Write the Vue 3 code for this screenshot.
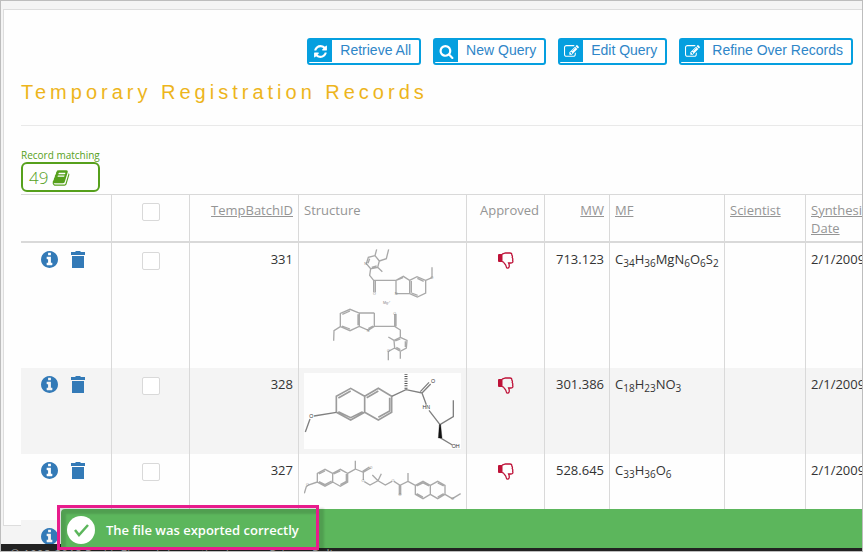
<script setup>
import { ref } from 'vue'

const icons = {
  refresh:
    'M1639 1056q0 5-1 7-64 268-268 434.5t-478 166.5q-146 0-282.5-55t-243.5-157l-129 129q-19 19-45 19t-45-19-19-45v-448q0-26 19-45t45-19h448q26 0 45 19t19 45-19 45l-137 137q71 66 161 102t187 36q134 0 250-65t186-179q11-17 53-117 8-23 30-23h192q13 0 22.5 9.5t9.5 22.5zm25-800v448q0 26-19 45t-45 19h-448q-26 0-45-19t-19-45 19-45l138-138q-148-137-349-137-134 0-250 65t-186 179q-11 17-53 117-8 23-30 23h-199q-13 0-22.5-9.5t-9.5-22.5v-7q65-268 270-434.5t480-166.5q146 0 284 55.5t245 156.5l130-129q19-19 45-19t45 19 19 45z',
  search:
    'M1216 832q0-185-131.5-316.5t-316.5-131.5-316.5 131.5-131.5 316.5 131.5 316.5 316.5 131.5 316.5-131.5 131.5-316.5zm512 832q0 52-38 90t-90 38q-54 0-90-38l-343-342q-179 124-399 124-143 0-273.5-55.5t-225-150-150-225-55.5-273.5 55.5-273.5 150-225 225-150 273.5-55.5 273.5 55.5 225 150 150 225 55.5 273.5q0 220-124 399l343 343q37 37 37 90z',
  edit:
    'M888 1184l116-116-152-152-116 116v56h96v96h56zm440-720q-16-16-33 1l-350 350q-17 17-1 33t33-1l350-350q17-17 1-33zm80 594v190q0 119-84.5 203.5t-203.5 84.5h-832q-119 0-203.5-84.5t-84.5-203.5v-832q0-119 84.5-203.5t203.5-84.5h832q63 0 117 25 15 7 18 23 3 17-9 29l-49 49q-14 14-32 8-23-6-45-6h-832q-66 0-113 47t-47 113v832q0 66 47 113t113 47h832q66 0 113-47t47-113v-126q0-13 9-22l64-64q15-15 35-7t20 29zm-96-738l288 288-672 672h-288v-288zm444 132l-92 92-288-288 92-92q28-28 68-28t68 28l152 152q28 28 28 68t-28 68z',
  book:
    'M1703 478q40 57 18 129l-275 906q-19 64-76.5 107.5t-122.5 43.5h-923q-77 0-148.5-53.5t-99.5-131.5q-24-67-2-127 0-4 3-27t4-37q1-8-3-21.5t-3-19.5q2-11 8-21t16.5-23.5 16.5-23.5q23-38 45-91.5t30-91.5q3-10 .5-30t-.5-28q3-11 17-28t17-23q21-36 42-92t25-90q1-9-2.5-32t.5-28q4-13 22-30.5t22-22.5q19-26 42.5-84.5t27.5-96.5q1-8-3-25.5t-2-26.5q2-8 9-18t18-23 17-21q8-12 16.5-30.5t15-35 16-36 19.5-32 26.5-23.5 36-11.5 47.5 5.5l-1 3q38-9 51-9h761q74 0 114 56t18 130l-274 906q-36 119-71.5 153.5t-128.5 34.5h-869q-27 0-38 15-11 16-1 43 24 70 144 70h923q29 0 56-15.5t35-41.5l300-987q7-22 5-57 38 15 59 43zm-1064 2q-4 13 2 22.5t20 9.5h608q13 0 25.5-9.5t16.5-22.5l21-64q4-13-2-22.5t-20-9.5h-608q-13 0-25.5 9.5t-16.5 22.5zm-83 256q-4 13 2 22.5t20 9.5h608q13 0 25.5-9.5t16.5-22.5l21-64q4-13-2-22.5t-20-9.5h-608q-13 0-25.5 9.5t-16.5 22.5z',
  info:
    'M1152 1376v-160q0-14-9-23t-23-9h-96v-512q0-14-9-23t-23-9h-320q-14 0-23 9t-9 23v160q0 14 9 23t23 9h96v320h-96q-14 0-23 9t-9 23v160q0 14 9 23t23 9h448q14 0 23-9t9-23zm-128-896v-160q0-14-9-23t-23-9h-192q-14 0-23 9t-9 23v160q0 14 9 23t23 9h192q14 0 23-9t9-23zm640 416q0 209-103 385.5t-279.5 279.5-385.5 103-385.5-103-279.5-279.5-103-385.5 103-385.5 279.5-279.5 385.5-103 385.5 103 279.5 279.5 103 385.5z',
}

const actions = [
  { label: 'Retrieve All', icon: 'refresh' },
  { label: 'New Query', icon: 'search' },
  { label: 'Edit Query', icon: 'edit' },
  { label: 'Refine Over Records', icon: 'edit' },
]

// Each formula is a list of [element, count] pairs.
const rows = ref([
  {
    id: 331,
    mw: '713.123',
    mf: [['C', 34], ['H', 36], ['MgN', 6], ['O', 6], ['S', 2]],
    date: '2/1/2009',
    picked: false,
    drawing: {
      box: '12 24 471 345',
      height: 'tall',
      bonds:
        'M230 28L225 47M266 28L259 56L238 63M225 47L205 52L199 71L212 86L233 82L238 63L225 47M209 56L204 70M215 82L230 78M233 82L247 95M212 86L209 106L221 121H288M221 121V157M226 123V157M288 121L310 109L329 121V161H288V121M292 120L309 113M334 123V158M329 121L351 110L377 121V159L352 171L329 161M352 115L371 124M335 159L353 166M377 121L396 113V82M223 219H178L150 208L121 220V260L150 272L178 259V219M150 213L127 223M174 223V256M126 258L150 267M121 260L102 272L101 302M178 259L205 271L223 259V219M205 266L219 258M223 259H284L301 270V292M284 259V222M288 259V222M301 292L282 301L284 324L301 334L319 324L321 301L301 292M301 297L286 303M289 322L301 329M316 321V304M282 301L265 291M284 324L265 334V361M301 334V356',
      labels: [
        { x: 260, y: 192, text: 'Mg²⁺' },
        { x: 223, y: 165, text: 'O' },
        { x: 197, y: 75, text: 'N' },
        { x: 288, y: 165, text: 'N' },
        { x: 396, y: 116, text: 'O' },
        { x: 284, y: 225, text: 'O' },
        { x: 204, y: 275, text: 'N' },
        { x: 265, y: 337, text: 'O' },
      ],
    },
  },
  {
    id: 328,
    mw: '301.386',
    mf: [['C', 18], ['H', 23], ['NO', 3]],
    date: '2/1/2009',
    picked: false,
    drawing: {
      box: '12 24 471 228',
      height: 'middle',
      rings:
        'M109 142V94L152 70L194 94V142L152 165ZM194 94L235 70L275 94V142L235 165L194 142M115 99L152 78M115 140L152 158L188 140M200 98L235 78M269 98V138L235 157',
      bonds:
        'M275 94L318 74L366 84L392 57M361 80L387 52M366 84L379 119M387 136L420 179L460 155V106M109 142L42 153M30 162L16 201M420 218L457 240',
      dashes: 'M318 71V27',
      wedge: 'M418 179H422L426 219H415Z',
      labels: [
        { x: 399, y: 55, text: 'O', strong: true },
        { x: 379, y: 132, text: 'HN', strong: true },
        { x: 34, y: 160, text: 'O', strong: true },
        { x: 467, y: 250, text: 'OH', strong: true },
      ],
    },
  },
  {
    id: 327,
    mw: '528.645',
    mf: [['C', 33], ['H', 36], ['O', 6]],
    date: '2/1/2009',
    picked: false,
    drawing: {
      box: '12 27 471 168',
      height: 'low',
      bonds:
        'M52 96V70L75 58L98 70V96L75 109ZM98 70L121 58L143 70V96L121 109L98 96M57 72L75 63M57 95L75 104L95 93M101 72L121 63M139 72V94L121 104M143 70L166 57V32M166 57L190 67L212 54M188 64L208 51M190 67V90M193 95L210 105L234 92L256 105L276 94M234 92L217 75M234 92L244 71M282 94L300 106L324 94V69M298 106V134M302 106V134M52 96L25 105L19 110L13 130M324 94L346 106V133L369 146L391 133V106L369 94L346 106M350 108L369 99L387 108M350 131L369 141M391 106L413 94L435 106V133L413 146L391 133M413 99L431 108M431 131L413 141M435 133L457 146L482 131',
      labels: [
        { x: 213, y: 57, text: 'O' },
        { x: 189, y: 97, text: 'O' },
        { x: 279, y: 97, text: 'O' },
        { x: 300, y: 138, text: 'O' },
        { x: 22, y: 109, text: 'O' },
        { x: 458, y: 149, text: 'O' },
      ],
    },
  },
  { id: 326, mw: '', mf: [], date: '', picked: false, drawing: null },
])

const allPicked = ref(false)
function pickAll() {
  rows.value.forEach((row) => (row.picked = allPicked.value))
}
</script>

<template>
  <div class="screen">
    <main class="main">
      <section class="panel">
        <nav class="actions">
          <button v-for="a in actions" :key="a.label" type="button" class="action">
            <span class="action-icon">
              <svg viewBox="0 0 1792 1792"><path :d="icons[a.icon]" /></svg>
            </span>
            <span class="action-label">{{ a.label }}</span>
          </button>
        </nav>

        <h1 class="title">Temporary Registration Records</h1>

        <div class="matching">
          <span class="matching-label">Record matching</span>
          <div class="matching-box">
            <span>49</span>
            <svg viewBox="0 0 1792 1792"><path :d="icons.book" /></svg>
          </div>
        </div>

        <div class="table-wrap">
          <table class="records">
            <colgroup>
              <col class="c-tools" /><col class="c-pick" /><col class="c-id" />
              <col class="c-structure" /><col class="c-approved" /><col class="c-mw" />
              <col class="c-mf" /><col class="c-scientist" /><col class="c-date" />
            </colgroup>
            <thead>
              <tr>
                <th></th>
                <th class="center">
                  <input v-model="allPicked" type="checkbox" aria-label="Select all records" @change="pickAll" />
                </th>
                <th class="right"><a href="#">TempBatchID</a></th>
                <th>Structure</th>
                <th class="right">Approved</th>
                <th class="right"><a href="#">MW</a></th>
                <th><a href="#">MF</a></th>
                <th><a href="#">Scientist</a></th>
                <th><a href="#">Synthesis Date</a></th>
              </tr>
            </thead>
            <tbody>
              <tr v-for="row in rows" :key="row.id">
                <td>
                  <div class="tools">
                    <button type="button" aria-label="Details">
                      <svg class="info" viewBox="128 128 1536 1536"><path :d="icons.info" /></svg>
                    </button>
                    <button type="button" aria-label="Delete">
                      <svg class="trash" viewBox="0 0 14 17">
                        <path d="M0 1H4.500V0H9.500V1H14V4H0ZM1 5H13V17H1Z" />
                      </svg>
                    </button>
                  </div>
                </td>
                <td class="center">
                  <input v-model="row.picked" type="checkbox" :aria-label="`Select record ${row.id}`" />
                </td>
                <td class="right">{{ row.id }}</td>
                <td>
                  <svg
                    v-if="row.drawing"
                    class="structure"
                    :class="row.drawing.height"
                    :viewBox="row.drawing.box"
                  >
                    <path v-if="row.drawing.rings" class="rings" :d="row.drawing.rings" />
                    <path class="bonds" :d="row.drawing.bonds" />
                    <path v-if="row.drawing.dashes" class="dashes" :d="row.drawing.dashes" />
                    <path v-if="row.drawing.wedge" class="wedge" :d="row.drawing.wedge" />
                    <text
                      v-for="(l, i) in row.drawing.labels"
                      :key="i"
                      :x="l.x"
                      :y="l.y"
                      :class="{ strong: l.strong }"
                    >{{ l.text }}</text>
                  </svg>
                </td>
                <td>
                  <svg v-if="row.drawing" class="thumb" viewBox="0 0 16 17">
                    <path class="cuff" d="M0 3Q0 2 1 2H4.500V10H1Q0 10 0 9Z" />
                    <path
                      class="hand"
                      d="M4 2.200L7.500 1H12Q14 1 13.800 3Q14.800 4 14.200 5.500Q15.200 7 14.600 8Q15.600 11 13 11H10.600Q11.500 13 11.200 14.500Q10.800 16.200 9.300 16.200Q8.400 16.200 8.200 14.500Q8 13 6.500 11.500Q5.500 9.700 4 9.700"
                    />
                  </svg>
                </td>
                <td class="right">{{ row.mw }}</td>
                <td class="formula"><template v-for="([el, n], i) in row.mf" :key="i">{{ el }}<sub>{{ n }}</sub></template></td>
                <td></td>
                <td>{{ row.date }}</td>
              </tr>
            </tbody>
          </table>
        </div>
      </section>
    </main>

    <footer class="footer">
      <span>© 1998-2018 PerkinElmer Informatics, Inc.</span>
      <a href="#">Privacy Policy</a>
    </footer>

    <div class="toast" role="status">
      <svg class="toast-icon" viewBox="0 0 28 28">
        <circle cx="14" cy="14" r="14" />
        <path d="M8 14L12 19L21 9" />
      </svg>
      <span>The file was exported correctly</span>
    </div>
    <div class="highlight"></div>
  </div>
</template>

<style>
body {
  margin: 0;
}
</style>

<style scoped>
* {
  box-sizing: border-box;
}

.screen {
  position: relative;
  display: flex;
  flex-direction: column;
  height: 100vh;
  overflow: hidden;
  border: 1px solid #bdbdbd;
  background: #f4f4f4;
  color: #333;
  font: 13px/22px "Open Sans", "Noto Sans", sans-serif;
}

.main {
  flex: 1;
  min-height: 0;
  padding: 8px 0 18px 2px;
}

.panel {
  height: 100%;
  padding: 28px 0 0 17px;
  border: 1px solid #ddd;
  border-right: 0;
  background: #fefefe;
}

.actions {
  display: flex;
  justify-content: flex-end;
  gap: 12px;
  padding-right: 9px;
}

.action {
  display: flex;
  height: 27px;
  padding: 0;
  border: 2px solid #059fdf;
  border-radius: 3px;
  background: #fff;
  color: #2f86c8;
  font: 14px/20px "Liberation Sans", Arial, sans-serif;
  cursor: pointer;
}

.action-icon {
  display: flex;
  align-items: center;
  justify-content: center;
  width: 23px;
  height: 22px;
  background: #059fdf;
}

.action-icon svg {
  width: 15px;
  height: 15px;
  fill: #fff;
}

.action-label {
  padding: 0 8px;
}

.title {
  margin: 0;
  padding: 13px 0 18px;
  border-bottom: 1px solid #e9e9e9;
  color: #edb51c;
  font: 400 20px/29px "Liberation Sans", Arial, sans-serif;
  letter-spacing: 4px;
}

.matching {
  width: 79px;
  padding-top: 22px;
  color: #56a01c;
}

.matching-label {
  display: block;
  font-size: 10px;
  line-height: 14px;
  white-space: nowrap;
}

.matching-box {
  display: flex;
  align-items: center;
  gap: 4px;
  height: 30px;
  padding: 2px 6px 0;
  border: 2px solid #56a01c;
  border-radius: 6px;
  font-size: 17px;
  font-weight: 300;
}

.matching-box svg {
  width: 18px;
  height: 18px;
  fill: #56a01c;
}

.table-wrap {
  padding-top: 2px;
  overflow: clip;
  overflow-clip-margin: 60px;
}

.records {
  width: 884px;
  table-layout: fixed;
  border-spacing: 0;
}

.c-tools { width: 90px; }
.c-pick { width: 78px; }
.c-id { width: 109px; }
.c-structure { width: 168px; }
.c-approved { width: 78px; }
.c-mw { width: 65px; }
.c-mf { width: 115px; }
.c-scientist { width: 81px; }
.c-date { width: 100px; }

th {
  height: 49px;
  padding: 6px 5px 0;
  border-top: 1px solid #d9d9d9;
  border-bottom: 2px solid #d9d9d9;
  color: #959595;
  font-weight: 400;
  line-height: 18px;
  text-align: left;
  vertical-align: top;
}

td {
  height: 32px;
  padding: 5px;
  vertical-align: top;
}

th + th,
td + td {
  border-left: 1px solid #d9d9d9;
}

th:nth-child(9) {
  padding-right: 20px;
}

tbody tr {
  background: #fefefe;
}

tbody tr:nth-child(even) {
  background: #f4f4f4;
}

th a {
  color: inherit;
}

.right {
  text-align: right;
}

.center {
  text-align: center;
}

input[type="checkbox"] {
  display: block;
  width: 18px;
  height: 18px;
  margin: 4px auto 0;
  border: 1px solid #d9d9d9;
  border-radius: 2px;
  background: #fff;
  appearance: none;
}

th input[type="checkbox"] {
  margin-top: 2px;
}

input[type="checkbox"]:checked {
  background: #337ab7;
}

.tools {
  display: flex;
  align-items: center;
  gap: 13px;
  height: 22px;
  padding-left: 15px;
}

.tools button {
  display: flex;
  padding: 0;
  border: 0;
  background: none;
  cursor: pointer;
}

.tools svg {
  height: 17px;
  fill: #337ab7;
}

.info {
  width: 17px;
}

.trash {
  width: 14px;
}

.structure {
  display: block;
  width: 157px;
  background: #fefefe;
}

.structure.tall { height: 115px; }
.structure.middle { height: 76px; }
.structure.low { height: 56px; }

.structure path {
  fill: none;
  stroke: #a9a9a9;
  stroke-width: 4;
}

.structure .rings {
  stroke: #9c9c9c;
  stroke-width: 5;
}

.structure.middle .bonds {
  stroke: #808080;
}

.structure .dashes {
  stroke: #555;
  stroke-width: 9;
  stroke-dasharray: 3 4;
}

.structure .wedge {
  fill: #111;
  stroke: #111;
  stroke-width: 1;
}

.structure text {
  fill: #888;
  font: 11px "Liberation Sans", Arial, sans-serif;
  text-anchor: middle;
}

.structure text.strong {
  fill: #333;
  font-size: 16px;
}

.thumb {
  display: block;
  width: 16px;
  height: 17px;
  margin: 4px auto 0;
}

.cuff {
  fill: #be1238;
}

.hand {
  fill: none;
  stroke: #be1238;
  stroke-width: 1.3;
}

.formula {
  white-space: nowrap;
}

sub {
  position: relative;
  top: 3px;
  font-size: 10px;
  line-height: 0;
  vertical-align: baseline;
}

.footer {
  position: relative;
  display: flex;
  gap: 24px;
  height: 7px;
  padding: 2px 9px 0;
  overflow: hidden;
  background: #222;
  color: #999;
  font-size: 12px;
  line-height: 18px;
}

.footer a {
  color: inherit;
  text-decoration: none;
}

.toast {
  position: absolute;
  right: 0;
  bottom: 3px;
  left: 60px;
  display: flex;
  align-items: center;
  gap: 11px;
  height: 39px;
  padding: 2px 6px 0;
  border-radius: 4px 0 0 0;
  background: #5cb65c;
  color: #fff;
  font-weight: 600;
}

.toast-icon {
  width: 28px;
  height: 28px;
}

.toast-icon circle {
  fill: #fff;
}

.toast-icon path {
  fill: none;
  stroke: #5cb65c;
  stroke-width: 2.5;
}

.highlight {
  position: absolute;
  bottom: 1px;
  left: 56px;
  width: 262px;
  height: 45px;
  border: 3px solid #e81c8c;
  box-shadow: 5px 3px 2px rgba(0, 0, 0, 0.13), inset 6px 6px 2px rgba(0, 0, 0, 0.12);
  pointer-events: none;
}
</style>
